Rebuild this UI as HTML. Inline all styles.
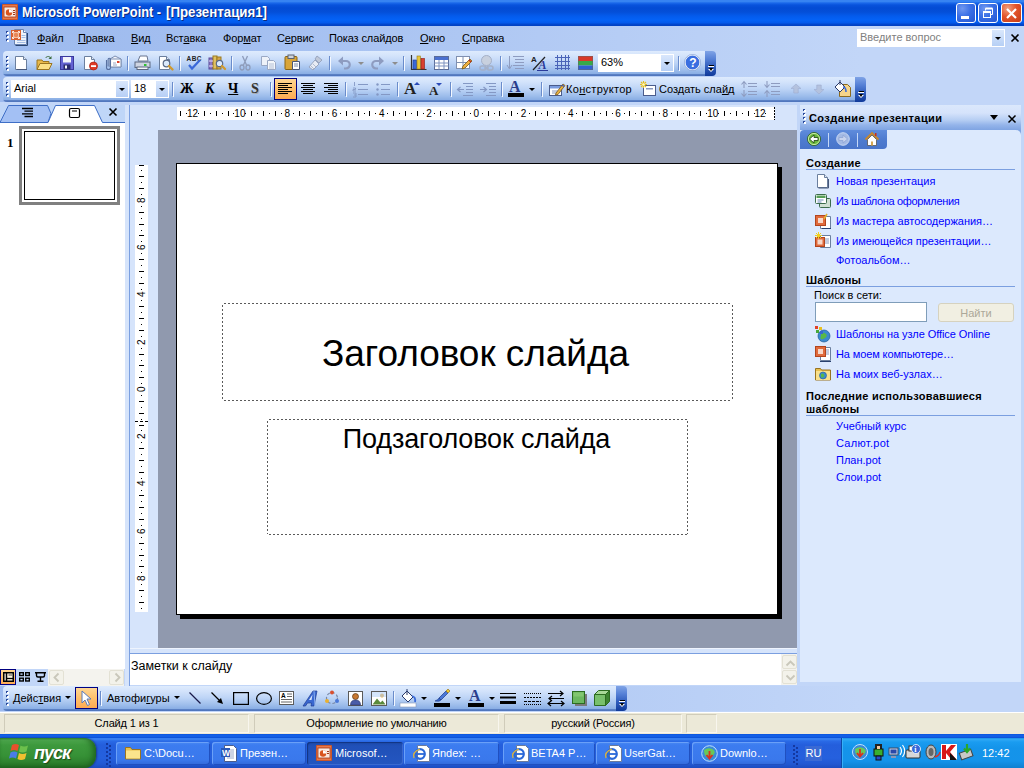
<!DOCTYPE html>
<html><head><meta charset="utf-8">
<style>
*{box-sizing:border-box;margin:0;padding:0}
html,body{width:1024px;height:768px;overflow:hidden;background:#c2d6f8;font-family:"Liberation Sans",sans-serif;font-size:11px;color:#000}
.a{position:absolute}
.nw{white-space:nowrap}
svg{position:absolute;overflow:visible}
#title{left:0;top:0;width:1024px;height:26px;background:linear-gradient(#2f7af0 0,#3f8cf4 1px,#1a68ea 3px,#0852dc 5px,#034bd4 8px,#044fd8 12px,#045bec 16px,#0462f6 20px,#0359ea 23px,#0248d0 24px,#0140c0 26px)}
#title .t{left:22px;top:4px;color:#fff;font-weight:bold;font-size:14px;text-shadow:1px 1px 0 #0c2a7c;transform-origin:0 0}
.wb{top:3px;width:20px;height:20px;border:1px solid #fff;border-radius:3px;background:radial-gradient(circle at 30% 25%,#6f97f0 0,#3a6fe6 45%,#2456d0 100%)}
#menubar{left:0;top:26px;width:1024px;height:25px;background:linear-gradient(90deg,#9dbaee 0,#a6c1f1 300px,#c2d6f8 860px)}
.mi{top:32px;font-size:11px;letter-spacing:-.12px}
#dock{left:0;top:51px;width:1024px;height:53px;background:linear-gradient(90deg,#9dbaee 0,#a6c1f1 300px,#c2d6f8 860px)}
.tb{left:3px;height:25px;border-radius:4px 0 0 4px;background:linear-gradient(#deebfd 0,#d3e3fb 5px,#bdd4f6 12px,#9dbdeb 19px,#88ade4 23px,#5a80c4 23.5px,#4c72ba 25px)}
.tbend{width:11px;height:25px;border-radius:0 4px 4px 0;background:linear-gradient(#7fa3e6 0,#5580d6 8px,#2f5cbc 16px,#103a9a 25px)}
.grip{width:2px;background:repeating-linear-gradient(#2a4a9c 0,#2a4a9c 2px,rgba(255,255,255,.0) 2px,rgba(255,255,255,0) 4px)}
.gripw{width:2px;background:repeating-linear-gradient(#fff 0,#fff 2px,rgba(255,255,255,.0) 2px,rgba(255,255,255,0) 4px)}
.sep{width:1px;height:14px;background:#6a8ccb;box-shadow:1px 1px 0 #f3f8ff}
.combo{height:18px;background:#fff;border:1px solid #fff;font-size:11px}
.dd{width:12px;background:linear-gradient(#d9e7fc,#b6cff5);top:0;bottom:0;right:0}
.dd:after,.arr:after{content:"";position:absolute;left:3px;top:7px;border:3px solid transparent;border-top:3px solid #000;border-bottom:0}
.arr{width:9px;height:9px}
.arr:after{left:1px;top:3px}
.arrg:after{border-top-color:#8d8d8d}
.sel{background:linear-gradient(#ffd692,#ffc06c 50%,#ffaa52);border:1px solid #000080}
.tl{font-size:11px;top:0}
.sbb{width:15px;height:15px;background:#f3f2ea;border:1px solid #e3e1d4;border-radius:2px}
.ph{font-weight:bold;font-size:11px;letter-spacing:.28px}
.pl{left:806px;width:209px;height:1px;background:#7b9fe0}
.lk{left:836px;font-size:11px;color:#0000ff}
.sp{top:714px;height:19px;border:1px solid #d4d0c0;border-right-color:#f8f6ee;border-bottom-color:#f8f6ee;border-top-color:#d0ccba;border-left-color:#d0ccba;text-align:center;line-height:17px;font-size:11px;white-space:nowrap;letter-spacing:-.15px}
.rn{top:1px;width:20px;text-align:center;font-size:10px;line-height:11px;background:transparent}
.rt{top:4px;width:1px;height:5px;background:#000}
.rd{top:6px;width:1px;height:1px;background:#000}
.vn{left:1px;height:20px;width:11px;font-size:10px;line-height:11px;writing-mode:vertical-rl;transform:rotate(180deg);text-align:center}
.vt{left:4px;height:1px;width:5px;background:#000}
.vd{left:6px;height:1px;width:1px;background:#000}
.tk{top:742px;height:23px;border-radius:3px;background:linear-gradient(#4a8af4 0,#3c7cf0 3px,#3a78ec 18px,#3268d8 23px);box-shadow:inset 1px 1px 0 #6aa0f8,inset -1px -1px 0 #2050c0;color:#fff;font-size:11px}
.tka{background:linear-gradient(#1c4aaa 0,#2050b8 4px,#2456c0 23px);box-shadow:inset 1px 1px 1px #123480,inset -1px -1px 0 #3a6ad0}
</style></head><body>
<!-- TITLE -->
<div id="title" class="a">
 <svg style="left:2px;top:4px" width="17" height="17" viewBox="0 0 17 17"><rect x="0" y="0" width="16" height="16" rx="1" fill="#c8562c"/><rect x="1" y="1" width="14" height="14" fill="#e8784a"/><rect x="2" y="3" width="12" height="10" fill="#fbe9df" stroke="#a03818" stroke-width=".8"/><circle cx="7" cy="8.5" r="3.2" fill="#d9541e"/><path d="M7 8.5V5.3A3.2 3.2 0 0 1 10.2 8.5z" fill="#fff"/><rect x="11" y="6" width="2" height="1" fill="#a03818"/><rect x="11" y="8" width="2" height="1" fill="#a03818"/><rect x="11" y="10" width="2" height="1" fill="#a03818"/></svg>
 <div class="t a nw" style="transform:scaleX(.912)">Microsoft PowerPoint -</div><div class="t a nw" style="left:165.500px;transform:scaleX(.948)">[Презентация1]</div>
 <div class="wb a" style="left:956px"><div class="a" style="left:4px;top:12px;width:8px;height:3px;background:#fff"></div></div>
 <div class="wb a" style="left:978px"><svg style="left:3px;top:3px" width="12" height="12" viewBox="0 0 12 12" fill="none" stroke="#fff"><path d="M3.5 3.5v-2h7v6h-2" stroke-width="1"/><path d="M3.5 1.5h7" stroke-width="2"/><rect x="1.5" y="4.5" width="7" height="6" stroke-width="1"/><path d="M1.5 5h7" stroke-width="2"/></svg></div>
 <div class="wb a" style="left:1001px;width:21px;background:radial-gradient(circle at 30% 25%,#f0a080 0,#e2542a 45%,#c43a14 100%)"><svg style="left:4px;top:4px" width="11" height="11" viewBox="0 0 11 11" stroke="#fff" stroke-width="2.2"><path d="M1 1l9 9M10 1l-9 9"/></svg></div>
</div>
<!-- MENU -->
<div id="menubar" class="a"></div>
<div class="grip a" style="left:6px;top:31px;height:11px"></div><div class="gripw a" style="left:7px;top:32px;height:11px"></div>
<svg style="left:11px;top:29px" width="17" height="17" viewBox="0 0 17 17"><path d="M3.500 .500h9l3 3v12h-12z" fill="#eef3fb" stroke="#6a84b4"/><path d="M12.500 .500v3h3" fill="#fff" stroke="#6a84b4"/><path d="M4.500 16.500h12v-12.500" fill="none" stroke="#2b4570"/><path d="M10.500 6.500h4M10.500 8.500h4M6 11.500h8.500M6 13.500h8.500" stroke="#a4bce4"/><rect x="0" y="1" width="10" height="10" fill="#d8602e"/><rect x="2" y="3" width="6" height="6" fill="#f6c4a8"/><circle cx="5" cy="6" r="2.200" fill="#e88858"/><path d="M1.500 4v-1.500h1.500M7 2.500h1.500v1.500M1.500 8v1.500h1.500M7 9.500h1.500v-1.500" fill="none" stroke="#fff" stroke-width=".9"/></svg>
<div class="mi a nw" style="left:37px"><u>Ф</u>айл</div>
<div class="mi a nw" style="left:78px"><u>П</u>равка</div>
<div class="mi a nw" style="left:131px"><u>В</u>ид</div>
<div class="mi a nw" style="left:166px">Вст<u>а</u>вка</div>
<div class="mi a nw" style="left:223px">Фор<u>м</u>ат</div>
<div class="mi a nw" style="left:277px">С<u>е</u>рвис</div>
<div class="mi a nw" style="left:329px">Показ слай<u>д</u>ов</div>
<div class="mi a nw" style="left:420px"><u>О</u>кно</div>
<div class="mi a nw" style="left:462px"><u>С</u>правка</div>
<div class="a" style="left:857px;top:29px;width:148px;height:18px;background:#fff;border:1px solid #fff"><div class="a nw" style="left:2px;top:1px;font-size:11px;color:#7f7f7f">Введите вопрос</div><div class="dd a"></div></div>
<svg style="left:1011px;top:34px" width="8" height="8" viewBox="0 0 8 8" stroke="#000" stroke-width="1.6"><path d="M.5.5l7 7M7.5.5l-7 7"/></svg>
<!-- DOCK -->
<div id="dock" class="a"></div>
<div class="tb a" style="top:51px;width:703px"></div><div class="tbend a" style="left:705px;top:51px"><div class="a" style="left:3px;top:15px;width:6px;height:1px;background:#fff"></div><div class="a" style="left:3px;top:18px;border:3px solid transparent;border-top:3px solid #fff;border-bottom:0"></div><div class="a" style="left:4px;top:14px;width:5px;height:1px;background:#000"></div><div class="a" style="left:4px;top:17px;border:2.5px solid transparent;border-top:3px solid #000;border-bottom:0"></div></div>
<div class="tb a" style="top:77px;width:853px"></div><div class="tbend a" style="left:855px;top:77px"><div class="a" style="left:3px;top:15px;width:6px;height:1px;background:#fff"></div><div class="a" style="left:3px;top:18px;border:3px solid transparent;border-top:3px solid #fff;border-bottom:0"></div><div class="a" style="left:4px;top:14px;width:5px;height:1px;background:#000"></div><div class="a" style="left:4px;top:17px;border:2.5px solid transparent;border-top:3px solid #000;border-bottom:0"></div></div>
<div class="grip a" style="left:6px;top:56px;height:15px"></div><div class="gripw a" style="left:7px;top:57px;height:15px"></div>
<div class="grip a" style="left:6px;top:82px;height:15px"></div><div class="gripw a" style="left:7px;top:83px;height:15px"></div>
<!-- TB1 icons -->
<svg style="left:14px;top:55px" width="16" height="16" viewBox="0 0 16 16"><path d="M1.5 1.5h8l3 3v10h-11z" fill="#fff" stroke="#6b7f9e"/><path d="M9.5 1.5v3h3" fill="#e4ebf5" stroke="#6b7f9e"/><path d="M2.5 14.5h10.5" stroke="#47587a"/></svg>
<svg style="left:36px;top:55px" width="17" height="16" viewBox="0 0 17 16"><path d="M1 5h5l1 1.5h6v8h-12z" fill="#e8b84a" stroke="#9a7420"/><path d="M1 14.5l3-6h12l-3 6z" fill="#fbdf86" stroke="#9a7420"/><path d="M9.5 3c1.5-2 4-2 5 0" fill="none" stroke="#3c6a3c"/><path d="M15.5 1v3h-3z" fill="#3c6a3c"/></svg>
<svg style="left:60px;top:56px" width="14" height="14" viewBox="0 0 14 14"><rect x=".5" y=".5" width="13" height="13" fill="#6462d2" stroke="#3a389c"/><rect x="3" y="1" width="8" height="5.500" fill="#f2f3fb"/><rect x="3.500" y="8.500" width="7" height="5" fill="#2a2a6c"/><rect x="5" y="9.500" width="2" height="3" fill="#f2f3fb"/></svg>
<svg style="left:83px;top:55px" width="16" height="16" viewBox="0 0 16 16"><path d="M1.5 1.5h7l3 3v10h-10z" fill="#fff" stroke="#6b7f9e"/><path d="M8.5 1.5v3h3" fill="#e4ebf5" stroke="#6b7f9e"/><circle cx="10.5" cy="11" r="4" fill="#e03c28" stroke="#a81c10" stroke-width=".7"/><rect x="8" y="10.2" width="5" height="1.8" fill="#fff"/></svg>
<svg style="left:104px;top:55px" width="18" height="16" viewBox="0 0 18 16"><path d="M6 4l5-3 6 3v8h-11z" fill="#f1f4fa" stroke="#7d8fb2"/><path d="M6 4h11v8h-11z" fill="#fff" stroke="#7d8fb2"/><rect x="13" y="6" width="2.5" height="2" fill="#d8402c"/><path d="M9 8h3M9 10h4" stroke="#9aa7c4"/><path d="M2.5 5v7.5a2 2 0 0 0 4 0v-8a1.2 1.2 0 0 0-2.4 0v7" fill="none" stroke="#5870a0" stroke-width="1.1"/></svg>
<div class="sep a" style="left:127px;top:56px"></div>
<svg style="left:134px;top:55px" width="17" height="16" viewBox="0 0 17 16"><path d="M4 6l2-5h7l1 5z" fill="#fff" stroke="#6a7690"/><rect x="1" y="7" width="15" height="5.500" fill="#cfd5e2" stroke="#5c6880"/><rect x="3" y="12" width="11" height="2.500" fill="#f4f6fa" stroke="#5c6880"/><rect x="10" y="9" width="2.500" height="2" fill="#30c030"/></svg>
<svg style="left:158px;top:55px" width="16" height="16" viewBox="0 0 16 16"><path d="M1.5 1.5h7l3 3v10h-10z" fill="#fff" stroke="#6b7f9e"/><path d="M8.5 1.5v3h3" fill="#e4ebf5" stroke="#6b7f9e"/><circle cx="8.500" cy="8.500" r="3.300" fill="#dbeafc" stroke="#5a6a86" stroke-width="1.200"/><path d="M11 11l3.500 3.500" stroke="#d09a30" stroke-width="2.400" stroke-linecap="round"/></svg>
<div class="sep a" style="left:179px;top:56px"></div>
<svg style="left:186px;top:54px" width="17" height="17" viewBox="0 0 17 17"><text x="0.500" y="6.500" font-family="Liberation Sans" font-size="6.500" font-weight="bold" fill="#222" textLength="15">ABC</text><path d="M3 11l3 3.500 8-8.500" fill="none" stroke="#3a68d8" stroke-width="2.200"/></svg>
<svg style="left:208px;top:54px" width="18" height="17" viewBox="0 0 18 17"><rect x="1" y="4" width="4" height="11" fill="#8c78c8" stroke="#5a4a98"/><rect x="5" y="2" width="4" height="13" fill="#e0c060" stroke="#9a7a20"/><rect x="9" y="3" width="4" height="12" fill="#d8a848" stroke="#9a7a20"/><path d="M1 7h4M1 12h4" stroke="#e8e0f8"/><circle cx="11.500" cy="9.500" r="3.200" fill="#dbeafc" stroke="#5a6a86" stroke-width="1.200"/><path d="M14 12l3 3" stroke="#d09a30" stroke-width="2.400" stroke-linecap="round"/></svg>
<div class="sep a" style="left:231px;top:56px"></div>
<svg style="left:239px;top:55px" width="12" height="16" viewBox="0 0 12 16" fill="none" stroke="#8e9cba" stroke-width="1.300"><path d="M3.500 1l4 9M8.500 1l-4 9"/><ellipse cx="3" cy="12.500" rx="2" ry="2.500"/><ellipse cx="9" cy="12.500" rx="2" ry="2.500"/></svg>
<svg style="left:261px;top:55px" width="16" height="16" viewBox="0 0 16 16"><path d="M.5 1.500h6l2 2v7h-8z" fill="#eef2f9" stroke="#9aa8c4"/><path d="M6.500 5.500h6l2 2v7h-8z" fill="#f4f7fb" stroke="#9aa8c4"/><path d="M8 9h5M8 11h5M8 13h5" stroke="#b4c0d6"/></svg>
<svg style="left:284px;top:54px" width="17" height="17" viewBox="0 0 17 17"><rect x="1" y="2.500" width="12" height="13" rx="1" fill="#d9a53a" stroke="#8a6414"/><rect x="4" y="1" width="6" height="3.500" fill="#cfd4dc" stroke="#5a6272"/><path d="M8.500 7.500h7v8h-7z" fill="#fff" stroke="#4a5878"/><path d="M10 10h4M10 12h4" stroke="#7a8aa8"/></svg>
<svg style="left:308px;top:55px" width="16" height="16" viewBox="0 0 16 16"><path d="M9 1l5 4-3 3-4-4z" fill="#c0c8d8" stroke="#99a6c0"/><path d="M7 5l4 4-6 6-4-3z" fill="#e8ecf4" stroke="#99a6c0"/><path d="M3 11l3 3M5 9l3 3" stroke="#b0bbd0"/></svg>
<div class="sep a" style="left:329px;top:56px"></div>
<svg style="left:338px;top:56px" width="13" height="14" viewBox="0 0 13 14" fill="none"><path d="M3 5h5a3.500 3.500 0 0 1 0 7.500h-2" stroke="#8e9cc0" stroke-width="2.200"/><path d="M0 5l5-4.500v9z" fill="#8e9cc0"/></svg>
<div class="arr arrg a" style="left:357px;top:59px"></div>
<svg style="left:371px;top:56px" width="13" height="14" viewBox="0 0 13 14" fill="none"><path d="M10 5h-5a3.500 3.500 0 0 0 0 7.500h2" stroke="#8e9cc0" stroke-width="2.200"/><path d="M13 5l-5-4.500v9z" fill="#8e9cc0"/></svg>
<div class="arr arrg a" style="left:391px;top:59px"></div>
<div class="sep a" style="left:403px;top:56px"></div>
<svg style="left:410px;top:54px" width="17" height="17" viewBox="0 0 17 17"><path d="M1.500 1v14.500h15" fill="none" stroke="#333" stroke-width="1.200"/><rect x="3" y="6" width="3.500" height="9" fill="#3a68d8" stroke="#1c3c98" stroke-width=".6"/><rect x="7" y="2" width="3.500" height="13" fill="#e8c83a" stroke="#9a7a14" stroke-width=".6"/><rect x="11" y="4.500" width="3.500" height="10.500" fill="#d84030" stroke="#8a1c14" stroke-width=".6"/></svg>
<svg style="left:434px;top:56px" width="15" height="14" viewBox="0 0 15 14"><rect x=".5" y=".5" width="14" height="13" fill="#fff" stroke="#5a6c98"/><rect x="1" y="1" width="13" height="3" fill="#4a70d0"/><path d="M.5 7h14M.5 10h14M5 4v9.500M10 4v9.500" stroke="#7f93c0"/></svg>
<svg style="left:456px;top:55px" width="16" height="16" viewBox="0 0 16 16"><rect x=".5" y="1.500" width="13" height="12" fill="#fff" stroke="#8090b0"/><path d="M.5 7.500h13M7 1.500v12" stroke="#8090b0"/><path d="M6 14l1-3 7-7 2 2-7 7z" fill="#f0b040" stroke="#7a5a14" stroke-width=".8"/><path d="M13 5l2 2" stroke="#c03020" stroke-width="1.500"/></svg>
<svg style="left:479px;top:55px" width="16" height="16" viewBox="0 0 16 16"><circle cx="7.500" cy="5.500" r="5" fill="#c8d0de" stroke="#a4b0c8"/><rect x="1" y="11" width="6" height="4" rx="2" fill="none" stroke="#a4b0c8" stroke-width="1.500"/><rect x="8" y="11" width="6" height="4" rx="2" fill="none" stroke="#a4b0c8" stroke-width="1.500"/><path d="M5 13h5" stroke="#a4b0c8" stroke-width="1.500"/></svg>
<div class="sep a" style="left:500px;top:56px"></div>
<svg style="left:507px;top:55px" width="17" height="16" viewBox="0 0 17 16" fill="none" stroke="#8e9cc0"><path d="M2.500 1v12M0 10l2.500 4 2.500-4" /><path d="M6 1.500h11M8 4.500h9M8 7.500h9M6 10.500h11M8 13.500h9"/></svg>
<svg style="left:531px;top:55px" width="17" height="16" viewBox="0 0 17 16"><text x="0" y="7" font-family="Liberation Sans" font-size="8" font-weight="bold" fill="#222">A</text><path d="M2 15l12-13" stroke="#222" stroke-width="1.200"/><text x="7.500" y="14" font-family="Liberation Serif" font-size="12" font-weight="bold" font-style="italic" fill="#2a3a9a">A</text><path d="M6 15.500h11" stroke="#2a3a9a"/></svg>
<svg style="left:555px;top:55px" width="15" height="15" viewBox="0 0 15 15" stroke="#4a64b8"><path d="M2.500 0v15M6.500 0v15M10.500 0v15M0 2.500h15M0 6.500h15M0 10.500h15M13.500 0v15M0 13.500h15" stroke-width="1"/></svg>
<svg style="left:578px;top:56px" width="15" height="14" viewBox="0 0 15 14"><rect x="0" y="0" width="15" height="5" fill="#d83828"/><rect x="0" y="5" width="15" height="4.500" fill="#38a848"/><rect x="0" y="9.500" width="15" height="4.500" fill="#3060d0"/><rect x=".5" y=".5" width="14" height="13" fill="none" stroke="#666" stroke-opacity=".5"/></svg>
<div class="combo a" style="left:598px;top:54px;width:76px"><div class="a nw" style="left:2px;top:1px;font-size:11px">63%</div><div class="dd a"></div></div>
<div class="sep a" style="left:678px;top:56px"></div>
<svg style="left:684px;top:54px" width="17" height="17" viewBox="0 0 17 17"><circle cx="8.500" cy="8.500" r="7.500" fill="#3a6ee0" stroke="#fff" stroke-width="1.200"/><circle cx="8.500" cy="8.500" r="8" fill="none" stroke="#6a8cc8" stroke-width=".6"/><text x="5.200" y="13" font-family="Liberation Sans" font-size="12" font-weight="bold" fill="#fff">?</text></svg>
<!-- TB2 -->
<div class="combo a" style="left:11px;top:80px;width:118px"><div class="a nw" style="left:2px;top:1px;font-size:11px">Arial</div><div class="dd a"></div></div>
<div class="combo a" style="left:131px;top:80px;width:38px"><div class="a nw" style="left:2px;top:1px;font-size:11px">18</div><div class="dd a"></div></div>
<div class="sep a" style="left:172px;top:82px"></div>
<div class="a nw" style="left:180px;top:81px;font:bold 14px 'Liberation Serif',serif">Ж</div>
<div class="a nw" style="left:205px;top:81px;font:italic bold 14px 'Liberation Serif',serif">К</div>
<div class="a nw" style="left:228px;top:81px;font:bold 14px 'Liberation Serif',serif;text-decoration:underline">Ч</div>
<div class="a nw" style="left:251px;top:81px;font:bold 14px 'Liberation Serif',serif;color:#333;text-shadow:1px 1px 0 #aaa">S</div>
<div class="sep a" style="left:270px;top:82px"></div>
<div class="sel a" style="left:274px;top:78px;width:23px;height:22px"></div>
<svg style="left:278px;top:83px" width="14" height="11" viewBox="0 0 14 11" stroke="#000" stroke-width="1"><path d="M0 0.5h14M0 2.5h10M0 4.5h14M0 6.5h10M0 8.5h14M0 10.5h10"/></svg>
<svg style="left:301px;top:83px" width="14" height="11" viewBox="0 0 14 11" stroke="#000" stroke-width="1"><path d="M0 0.5h14M2 2.5h10M0 4.5h14M2 6.5h10M0 8.5h14M2 10.5h10"/></svg>
<svg style="left:324px;top:83px" width="14" height="11" viewBox="0 0 14 11" stroke="#000" stroke-width="1"><path d="M0 0.5h14M4 2.5h10M0 4.5h14M4 6.5h10M0 8.5h14M4 10.5h10"/></svg>
<div class="sep a" style="left:345px;top:82px"></div>
<svg style="left:353px;top:82px" width="15" height="15" viewBox="0 0 15 15" stroke="#8498c4"><path d="M5 2.500h10M5 7.500h10M5 12.500h10" stroke-width="1.200"/><path d="M1.500 0v4M0 6h2.500v1.500h-2.500v1.500h3M0 11h3v2h-2M3 13v2h-3" fill="none" stroke-width=".9"/></svg>
<svg style="left:376px;top:82px" width="14" height="15" viewBox="0 0 14 15" stroke="#8498c4"><path d="M5 2.500h9M5 7.500h9M5 12.500h9" stroke-width="1.200"/><circle cx="1.500" cy="2.500" r="1.200" fill="#8498c4" stroke="none"/><circle cx="1.500" cy="7.500" r="1.200" fill="#8498c4" stroke="none"/><circle cx="1.500" cy="12.500" r="1.200" fill="#8498c4" stroke="none"/></svg>
<div class="sep a" style="left:397px;top:82px"></div>
<div class="a nw" style="left:404px;top:79px;font:bold 17px 'Liberation Serif',serif;color:#222">A</div>
<div class="a" style="left:414px;top:82px;border:3px solid transparent;border-bottom:3px solid #2a4ab8;border-top:0"></div>
<div class="a nw" style="left:429px;top:83px;font:bold 13px 'Liberation Serif',serif;color:#222">A</div>
<div class="a" style="left:436px;top:83px;border:3px solid transparent;border-top:3px solid #2a4ab8;border-bottom:0"></div>
<div class="sep a" style="left:450px;top:82px"></div>
<svg style="left:457px;top:82px" width="16" height="15" viewBox="0 0 16 15" fill="none" stroke="#8498c4"><path d="M6 1.500h10M9 4.500h7M9 7.500h7M9 10.500h7M6 13.500h10"/><path d="M7 7.500h-6M3.500 5l-3 2.500 3 2.500" stroke-width="1.200"/></svg>
<svg style="left:480px;top:82px" width="16" height="15" viewBox="0 0 16 15" fill="none" stroke="#8498c4"><path d="M6 1.500h10M9 4.500h7M9 7.500h7M9 10.500h7M6 13.500h10"/><path d="M0 7.500h6M3.500 5l3 2.500-3 2.500" stroke-width="1.200"/></svg>
<div class="sep a" style="left:501px;top:82px"></div>
<div class="a nw" style="left:509px;top:78px;font:bold 16px 'Liberation Serif',serif;color:#2a3e8c">A</div>
<div class="a" style="left:508px;top:93px;width:16px;height:4px;background:#000"></div>
<div class="arr a" style="left:528px;top:85px"></div>
<div class="sep a" style="left:541px;top:82px"></div>
<svg style="left:549px;top:82px" width="16" height="15" viewBox="0 0 16 15"><rect x=".5" y="3.500" width="12" height="10" fill="#fff" stroke="#4a5c8c"/><rect x="1" y="4" width="11" height="2.500" fill="#7a9ce0"/><path d="M3 9h6M3 11h5" stroke="#8a9ac0"/><path d="M7 11l7-9 2 1.500-7 9-2.500.5z" fill="#e8b040" stroke="#6a4c10" stroke-width=".7"/><path d="M13 3l2 1.500" stroke="#3a58b8" stroke-width="1.400"/></svg>
<div class="tl a nw" style="left:566px;top:83px;letter-spacing:.3px">Ко<u>н</u>структор</div>
<svg style="left:640px;top:81px" width="16" height="16" viewBox="0 0 16 16"><rect x="3.500" y="4.500" width="12" height="10" fill="#fff" stroke="#4a5c8c"/><rect x="6" y="7" width="7" height="1.500" fill="#8a9ac0"/><path d="M3.500 0v7M0 3.500h7M1 1l5 5M6 1l-5 5" stroke="#e8c020" stroke-width="1.100"/><circle cx="3.500" cy="3.500" r="1.300" fill="#fff8c0"/></svg>
<div class="tl a nw" style="left:659px;top:83px">Создать сла<u>й</u>д</div>
<svg style="left:741px;top:81px" width="16" height="16" viewBox="0 0 16 16" fill="none" stroke="#8e9cc0"><path d="M7 2.500h9M7 5.500h9M7 10.500h9M7 13.500h9" stroke-width="1.200"/><path d="M3 1v6M.5 3.500l2.500-3 2.500 3M3 15v-6M.5 12.500l2.500 3 2.500-3" stroke-width="1.100"/></svg>
<svg style="left:764px;top:81px" width="16" height="16" viewBox="0 0 16 16" fill="none" stroke="#8e9cc0"><path d="M7 2.500h9M7 5.500h9M7 10.500h9M7 13.500h9" stroke-width="1.200"/><path d="M3 0v6M.5 3.500l2.500 3 2.500-3M3 16v-6M.5 12.500l2.500-3 2.500 3" stroke-width="1.100"/></svg>
<svg style="left:791px;top:84px" width="10" height="9" viewBox="0 0 11 10"><path d="M5.500 0l5.500 5h-3v5h-5v-5h-3z" fill="#b4c2de" stroke="#9aaace" stroke-width=".6"/></svg>
<svg style="left:814px;top:85px" width="10" height="9" viewBox="0 0 11 10"><path d="M5.500 10l5.500-5h-3v-5h-5v5h-3z" fill="#b4c2de" stroke="#9aaace" stroke-width=".6"/></svg>
<svg style="left:834px;top:80px" width="17" height="17" viewBox="0 0 17 17"><path d="M5.500 4.500h8l3 3v9h-11z" fill="#f5d48a" stroke="#8a6a20"/><path d="M1 7l5-5 5 5-5 5z" fill="#fff" stroke="#2a3a6a"/><path d="M6 0v5" stroke="#2a3a6a"/><path d="M9 7q3 0 3 5" fill="none" stroke="#3a6ad8" stroke-width="1.600"/></svg>
<!-- WORKSPACE -->
<div class="a" style="left:0;top:102px;width:1024px;height:3px;background:#c2d6f8"></div>
<div class="a" style="left:0;top:105px;width:125px;height:18px;background:#bfd6f8"></div>
<div class="a" style="left:0;top:123px;width:125px;height:546px;background:#fff"></div>
<svg style="left:0;top:105px" width="125" height="18" viewBox="0 0 125 18"><path d="M0 17.500l8.500-17h39l3.500 8-3 9z" fill="#a3c0f4" stroke="#3e6ec6" stroke-width="1"/><path d="M48 18l7.500-17.500h39l8 17.500z" fill="#fff"/><path d="M48 17.500l7.500-17h39l8 17h22.500" fill="none" stroke="#3e6ec6" stroke-width="1"/><path d="M22 3.500h11M24.500 6.200h8.500M22 8.800h11M24.500 11.500h8.500" stroke="#000" stroke-width="1.300"/><rect x="69.500" y="3.500" width="10" height="9" rx="1.500" fill="#fff" stroke="#000" stroke-width="1.200"/><path d="M72 6h5" stroke="#000"/><path d="M109.500 3.500l7 7M116.500 3.500l-7 7" stroke="#000" stroke-width="1.600"/></svg>
<div class="a" style="left:125px;top:105px;width:4px;height:581px;background:#d6e4fb"></div>
<div class="a" style="left:129px;top:105px;width:1px;height:581px;background:#7b9fe0"></div>
<!-- thumbnail -->
<div class="a nw" style="left:7px;top:135px;font:bold 13px 'Liberation Serif',serif">1</div>
<div class="a" style="left:19px;top:126px;width:101px;height:79px;border:3px solid #808080;background:#fff"></div>
<div class="a" style="left:24px;top:131px;width:91px;height:69px;border:1px solid #000;background:#fff"></div>
<!-- main bg -->
<div class="a" style="left:130px;top:105px;width:668px;height:548px;background:#d6e4fb"></div>
<div class="a" style="left:158px;top:130px;width:639px;height:518px;background:#9099ae"></div>
<!-- slide -->
<div class="a" style="left:180px;top:167px;width:602px;height:452px;background:#000"></div>
<div class="a" style="left:176px;top:163px;width:602px;height:452px;background:#fff;border:1px solid #000"></div>
<div class="a" style="left:224px;top:303px;width:508px;height:1px;background:repeating-linear-gradient(90deg,#5a5a5a 0,#5a5a5a 2px,transparent 2px,transparent 4px)"></div><div class="a" style="left:224px;top:400px;width:508px;height:1px;background:repeating-linear-gradient(90deg,#5a5a5a 0,#5a5a5a 2px,transparent 2px,transparent 4px)"></div><div class="a" style="left:222px;top:305px;width:1px;height:95px;background:repeating-linear-gradient(180deg,#5a5a5a 0,#5a5a5a 2px,transparent 2px,transparent 4px)"></div><div class="a" style="left:732px;top:305px;width:1px;height:95px;background:repeating-linear-gradient(180deg,#5a5a5a 0,#5a5a5a 2px,transparent 2px,transparent 4px)"></div>
<div class="a" style="left:269px;top:419px;width:418px;height:1px;background:repeating-linear-gradient(90deg,#5a5a5a 0,#5a5a5a 2px,transparent 2px,transparent 4px)"></div><div class="a" style="left:269px;top:534px;width:418px;height:1px;background:repeating-linear-gradient(90deg,#5a5a5a 0,#5a5a5a 2px,transparent 2px,transparent 4px)"></div><div class="a" style="left:267px;top:421px;width:1px;height:113px;background:repeating-linear-gradient(180deg,#5a5a5a 0,#5a5a5a 2px,transparent 2px,transparent 4px)"></div><div class="a" style="left:687px;top:421px;width:1px;height:113px;background:repeating-linear-gradient(180deg,#5a5a5a 0,#5a5a5a 2px,transparent 2px,transparent 4px)"></div>
<div class="a nw" style="left:220px;top:332px;width:511px;text-align:center;font-size:37px;line-height:44px;letter-spacing:-.05px">Заголовок слайда</div>
<div class="a nw" style="left:266px;top:423px;width:421px;text-align:center;font-size:27px;line-height:32px;letter-spacing:-.15px">Подзаголовок слайда</div>
<!-- rulers -->
<div id="hr" class="a" style="left:177px;top:107px;width:598px;height:13px;background:#fff;overflow:hidden"><div class="rt a" style="left:3px"></div><div class="rn a" style="left:5.6px">12</div><div class="rt a" style="left:27px"></div><div class="rt a" style="left:39px"></div><div class="rt a" style="left:51px"></div><div class="rn a" style="left:52.9px">10</div><div class="rt a" style="left:74px"></div><div class="rt a" style="left:86px"></div><div class="rt a" style="left:98px"></div><div class="rn a" style="left:100.2px">8</div><div class="rt a" style="left:122px"></div><div class="rt a" style="left:133px"></div><div class="rt a" style="left:145px"></div><div class="rn a" style="left:147.5px">6</div><div class="rt a" style="left:169px"></div><div class="rt a" style="left:181px"></div><div class="rt a" style="left:192px"></div><div class="rn a" style="left:194.7px">4</div><div class="rt a" style="left:216px"></div><div class="rt a" style="left:228px"></div><div class="rt a" style="left:240px"></div><div class="rn a" style="left:242.0px">2</div><div class="rt a" style="left:263px"></div><div class="rt a" style="left:275px"></div><div class="rt a" style="left:287px"></div><div class="rn a" style="left:289.3px">0</div><div class="rt a" style="left:311px"></div><div class="rt a" style="left:322px"></div><div class="rt a" style="left:334px"></div><div class="rn a" style="left:336.6px">2</div><div class="rt a" style="left:358px"></div><div class="rt a" style="left:370px"></div><div class="rt a" style="left:382px"></div><div class="rn a" style="left:383.9px">4</div><div class="rt a" style="left:405px"></div><div class="rt a" style="left:417px"></div><div class="rt a" style="left:429px"></div><div class="rn a" style="left:431.1px">6</div><div class="rt a" style="left:452px"></div><div class="rt a" style="left:464px"></div><div class="rt a" style="left:476px"></div><div class="rn a" style="left:478.4px">8</div><div class="rt a" style="left:500px"></div><div class="rt a" style="left:512px"></div><div class="rt a" style="left:523px"></div><div class="rn a" style="left:525.7px">10</div><div class="rt a" style="left:547px"></div><div class="rt a" style="left:559px"></div><div class="rt a" style="left:571px"></div><div class="rn a" style="left:573.0px">12</div><div class="rd a" style="left:9px"></div><div class="rd a" style="left:21px"></div><div class="rd a" style="left:33px"></div><div class="rd a" style="left:45px"></div><div class="rd a" style="left:56px"></div><div class="rd a" style="left:68px"></div><div class="rd a" style="left:80px"></div><div class="rd a" style="left:92px"></div><div class="rd a" style="left:104px"></div><div class="rd a" style="left:116px"></div><div class="rd a" style="left:127px"></div><div class="rd a" style="left:139px"></div><div class="rd a" style="left:151px"></div><div class="rd a" style="left:163px"></div><div class="rd a" style="left:175px"></div><div class="rd a" style="left:187px"></div><div class="rd a" style="left:198px"></div><div class="rd a" style="left:210px"></div><div class="rd a" style="left:222px"></div><div class="rd a" style="left:234px"></div><div class="rd a" style="left:246px"></div><div class="rd a" style="left:257px"></div><div class="rd a" style="left:269px"></div><div class="rd a" style="left:281px"></div><div class="rd a" style="left:293px"></div><div class="rd a" style="left:305px"></div><div class="rd a" style="left:317px"></div><div class="rd a" style="left:328px"></div><div class="rd a" style="left:340px"></div><div class="rd a" style="left:352px"></div><div class="rd a" style="left:364px"></div><div class="rd a" style="left:376px"></div><div class="rd a" style="left:387px"></div><div class="rd a" style="left:399px"></div><div class="rd a" style="left:411px"></div><div class="rd a" style="left:423px"></div><div class="rd a" style="left:435px"></div><div class="rd a" style="left:447px"></div><div class="rd a" style="left:458px"></div><div class="rd a" style="left:470px"></div><div class="rd a" style="left:482px"></div><div class="rd a" style="left:494px"></div><div class="rd a" style="left:506px"></div><div class="rd a" style="left:517px"></div><div class="rd a" style="left:529px"></div><div class="rd a" style="left:541px"></div><div class="rd a" style="left:553px"></div><div class="rd a" style="left:565px"></div><div class="rd a" style="left:577px"></div><div class="rd a" style="left:588px"></div><div class="a" style="left:597px;top:0;width:1px;height:13px;background:repeating-linear-gradient(#000 0,#000 2px,#fff 2px,#fff 3px)"></div></div>
<div id="vr" class="a" style="left:135px;top:165px;width:13px;height:447px;background:#fff;overflow:hidden"><div class="vt a" style="top:0px"></div><div class="vt a" style="top:11px"></div><div class="vt a" style="top:23px"></div><div class="vn a" style="top:24.7px">8</div><div class="vt a" style="top:47px"></div><div class="vt a" style="top:59px"></div><div class="vt a" style="top:70px"></div><div class="vn a" style="top:72.0px">6</div><div class="vt a" style="top:94px"></div><div class="vt a" style="top:106px"></div><div class="vt a" style="top:118px"></div><div class="vn a" style="top:119.2px">4</div><div class="vt a" style="top:141px"></div><div class="vt a" style="top:153px"></div><div class="vt a" style="top:165px"></div><div class="vn a" style="top:166.5px">2</div><div class="vt a" style="top:189px"></div><div class="vt a" style="top:200px"></div><div class="vt a" style="top:212px"></div><div class="vn a" style="top:213.8px">0</div><div class="vt a" style="top:236px"></div><div class="vt a" style="top:248px"></div><div class="vt a" style="top:260px"></div><div class="vn a" style="top:261.1px">2</div><div class="vt a" style="top:283px"></div><div class="vt a" style="top:295px"></div><div class="vt a" style="top:307px"></div><div class="vn a" style="top:308.4px">4</div><div class="vt a" style="top:330px"></div><div class="vt a" style="top:342px"></div><div class="vt a" style="top:354px"></div><div class="vn a" style="top:355.6px">6</div><div class="vt a" style="top:378px"></div><div class="vt a" style="top:390px"></div><div class="vt a" style="top:401px"></div><div class="vn a" style="top:402.9px">8</div><div class="vt a" style="top:425px"></div><div class="vt a" style="top:437px"></div><div class="vd a" style="top:5px"></div><div class="vd a" style="top:17px"></div><div class="vd a" style="top:29px"></div><div class="vd a" style="top:41px"></div><div class="vd a" style="top:53px"></div><div class="vd a" style="top:65px"></div><div class="vd a" style="top:76px"></div><div class="vd a" style="top:88px"></div><div class="vd a" style="top:100px"></div><div class="vd a" style="top:112px"></div><div class="vd a" style="top:124px"></div><div class="vd a" style="top:135px"></div><div class="vd a" style="top:147px"></div><div class="vd a" style="top:159px"></div><div class="vd a" style="top:171px"></div><div class="vd a" style="top:183px"></div><div class="vd a" style="top:195px"></div><div class="vd a" style="top:206px"></div><div class="vd a" style="top:218px"></div><div class="vd a" style="top:230px"></div><div class="vd a" style="top:242px"></div><div class="vd a" style="top:254px"></div><div class="vd a" style="top:265px"></div><div class="vd a" style="top:277px"></div><div class="vd a" style="top:289px"></div><div class="vd a" style="top:301px"></div><div class="vd a" style="top:313px"></div><div class="vd a" style="top:325px"></div><div class="vd a" style="top:336px"></div><div class="vd a" style="top:348px"></div><div class="vd a" style="top:360px"></div><div class="vd a" style="top:372px"></div><div class="vd a" style="top:384px"></div><div class="vd a" style="top:395px"></div><div class="vd a" style="top:407px"></div><div class="vd a" style="top:419px"></div><div class="vd a" style="top:431px"></div><div class="vd a" style="top:443px"></div><div class="a" style="left:0;top:256px;width:13px;height:1px;background:repeating-linear-gradient(90deg,#000 0,#000 3px,#fff 3px,#fff 5px)"></div></div>
<!-- notes -->
<div class="a" style="left:130px;top:648px;width:667px;height:1px;background:#eef4fe"></div><div class="a" style="left:129px;top:653px;width:669px;height:1px;background:#7b9fe0"></div>
<div class="a" style="left:129px;top:654px;width:669px;height:31px;background:#fff;border-left:1px solid #7b9fe0"></div>
<div class="a nw" style="left:131px;top:659px;font-size:12.5px">Заметки к слайду</div>
<div class="a" style="left:781px;top:654px;width:17px;height:31px;background:#f4f3ee"></div>
<div class="sbb a" style="left:782px;top:655px;height:14px"><svg style="left:3px;top:4px" width="9" height="6" viewBox="0 0 9 6" fill="none" stroke="#c9c7ba" stroke-width="1.800"><path d="M.5 5.500l4-4 4 4"/></svg></div>
<div class="sbb a" style="left:782px;top:670px;height:14px"><svg style="left:3px;top:4px" width="9" height="6" viewBox="0 0 9 6" fill="none" stroke="#c9c7ba" stroke-width="1.800"><path d="M.5.5l4 4 4-4"/></svg></div>
<!-- view buttons -->
<div class="a" style="left:0;top:669px;width:124px;height:17px;background:#c2d6f8"></div>
<div class="sel a" style="left:0;top:669px;width:16px;height:16px"></div>
<svg style="left:3px;top:672px" width="11" height="10" viewBox="0 0 11 10" fill="none" stroke="#000"><rect x=".75" y=".75" width="9.500" height="8.500" stroke-width="1.500" fill="#fff4e0"/><path d="M3.500 0v10" stroke-width="1.500"/><path d="M4 6.500h7" stroke-width="1.300"/><path d="M5.500 3h3.500" stroke="#444" stroke-width="1"/></svg>
<svg style="left:19px;top:672px" width="11" height="10" viewBox="0 0 11 10" fill="none" stroke="#000" stroke-width="1.400"><rect x=".7" y=".7" width="3.600" height="2.800"/><rect x="6.700" y=".7" width="3.600" height="2.800"/><rect x=".7" y="6.200" width="3.600" height="2.800"/><rect x="6.700" y="6.200" width="3.600" height="2.800"/></svg>
<svg style="left:35px;top:672px" width="11" height="10" viewBox="0 0 11 10" fill="none" stroke="#000"><path d="M0 .75h11" stroke-width="1.500"/><path d="M1.500 1v2.500q0 1.500 1.500 1.500h5q1.500 0 1.500-1.500v-2.500" stroke-width="1.400"/><path d="M5.500 5v3.500M2.500 9.250h6" stroke-width="1.400"/></svg>
<div class="a" style="left:48px;top:669px;width:76px;height:17px;background:#f4f3ee"></div>
<div class="sbb a" style="left:49px;top:670px;height:15px"><svg style="left:3px;top:2px" width="6" height="9" viewBox="0 0 6 9" fill="none" stroke="#c9c7ba" stroke-width="1.800"><path d="M5.500.500l-4 4 4 4"/></svg></div>
<div class="sbb a" style="left:109px;top:670px;height:15px"><svg style="left:5px;top:2px" width="6" height="9" viewBox="0 0 6 9" fill="none" stroke="#c9c7ba" stroke-width="1.800"><path d="M.5.500l4 4-4 4"/></svg></div>
<!-- TASK PANE -->
<div class="a" style="left:797px;top:105px;width:227px;height:581px;background:#c2d6f8"></div>
<div class="a" style="left:800px;top:105px;width:221px;height:31px;background:linear-gradient(#dbe8fc 0,#d5e3fb 8px,#b6cef3 15px,#94b4ea 20px,#7fa4e2 25px)"></div>
<div class="grip a" style="left:803px;top:109px;height:15px"></div><div class="gripw a" style="left:804px;top:110px;height:15px"></div>
<div class="a nw" style="left:809px;top:112px;font-weight:bold;font-size:11px;letter-spacing:.42px">Создание презентации</div>
<div class="a" style="left:990px;top:115px;border:4.500px solid transparent;border-top:5px solid #000;border-bottom:0"></div>
<svg style="left:1008px;top:115px" width="8" height="8" viewBox="0 0 8 8" stroke="#000" stroke-width="1.500"><path d="M.5.5l7 7M7.500.500l-7 7"/></svg>
<div class="a" style="left:800px;top:130px;width:221px;height:552px;background:#dce9fd;border-radius:0 5px 0 0"></div>
<div class="a" style="left:800px;top:130px;width:87px;height:19px;background:linear-gradient(#5f8cdc 0,#4f7cd0 9px,#4874ca 19px);border-radius:4px 0 4px 0"></div>
<svg style="left:807px;top:132px" width="14" height="14" viewBox="0 0 14 14"><circle cx="7" cy="7" r="6.500" fill="#6ab83c" stroke="#2c5c18" stroke-width=".8"/><circle cx="7" cy="7" r="5.600" fill="none" stroke="#c8e8a8" stroke-width="1"/><path d="M2.500 7l4.500-4v2.500h4v3h-4v2.500z" fill="#fff" stroke="#1c3c10" stroke-width=".8"/></svg>
<div class="a" style="left:828px;top:133px;width:1px;height:14px;background:#c4d8f8"></div>
<svg style="left:836px;top:132px" width="14" height="14" viewBox="0 0 14 14"><circle cx="7" cy="7" r="6.300" fill="#a4bae4" stroke="#c8d8f4" stroke-width="1"/><path d="M11.500 7l-4.500-4v2.500h-4v3h4v2.500z" fill="#c8d4ee" stroke="#8ea4d4" stroke-width=".8"/></svg>
<div class="a" style="left:857px;top:133px;width:1px;height:14px;background:#c4d8f8"></div>
<svg style="left:865px;top:132px" width="14" height="14" viewBox="0 0 14 14"><path d="M2.500 7.500l4.500-4.500 4.500 4.500v6h-9z" fill="#fff" stroke="#555" stroke-width=".8"/><path d="M.500 7.500l6.500-6.500 6.500 6.500" fill="none" stroke="#c8862a" stroke-width="1.800"/><rect x="6" y="9.500" width="2" height="4" fill="#d8a850"/><rect x="10" y="1" width="1.500" height="3" fill="#c83020"/></svg>
<!-- sections -->
<div class="ph a nw" style="left:806px;top:157px">Создание</div>
<div class="pl a" style="top:169px"></div>
<svg style="left:816px;top:174px" width="14" height="15" viewBox="0 0 14 15"><path d="M1.500 .500h7l3 3v10h-10z" fill="#fff" stroke="#6b7f9e"/><path d="M8.500 .500v3h3" fill="#e4ebf5" stroke="#6b7f9e"/><path d="M2.500 14h10v-9" fill="none" stroke="#47587a"/></svg>
<div class="lk a nw" style="top:175px">Новая презентация</div>
<svg style="left:815px;top:194px" width="16" height="15" viewBox="0 0 16 15"><rect x="4.500" y="4.500" width="11" height="9" rx="1" fill="#cfe0d2" stroke="#3c6c4c"/><rect x=".5" y=".5" width="11" height="9" rx="1" fill="#fff" stroke="#3c6c4c"/><rect x="1.500" y="1.500" width="9" height="2.500" fill="#58a058"/><path d="M2.500 6h6M2.500 8h4" stroke="#6a8ab8"/></svg>
<div class="lk a nw" style="top:195px;letter-spacing:-.33px">Из шаблона оформления</div>
<svg style="left:815px;top:213px" width="16" height="17" viewBox="0 0 16 17"><path d="M5.500 3.500h10v12h-10z" fill="#fff" stroke="#6b7f9e"/><rect x=".5" y="2.500" width="10" height="10" fill="#e06a3c" stroke="#b3441c"/><rect x="3" y="5" width="5" height="5" fill="#f8d8c8"/><path d="M12 1l-3 5" stroke="#e0b030" stroke-width="1.600"/><path d="M7 15.500h9" stroke="#27406e"/></svg>
<div class="lk a nw" style="top:215px">Из мастера автосодержания…</div>
<svg style="left:815px;top:232px" width="16" height="17" viewBox="0 0 16 17"><path d="M5.500 3.500h10v12h-10z" fill="#fff" stroke="#6b7f9e"/><path d="M8 7h6M8 9h6M8 11h6" stroke="#8a9ac0"/><rect x=".5" y="5.500" width="9" height="9" fill="#e06a3c" stroke="#b3441c"/><rect x="2.500" y="7.500" width="5" height="5" fill="#f8d8c8"/><path d="M3.500 0v7M0 3.500h7M1 1l5 5M6 1l-5 5" stroke="#f0d020" stroke-width="1"/></svg>
<div class="lk a nw" style="top:235px">Из имеющейся презентации…</div>
<div class="lk a nw" style="top:254px">Фотоальбом…</div>
<div class="ph a nw" style="left:806px;top:274px">Шаблоны</div>
<div class="pl a" style="top:286px"></div>
<div class="a nw" style="left:814px;top:289px;font-size:11px">Поиск в сети:</div>
<div class="a" style="left:815px;top:302px;width:112px;height:20px;background:#fff;border:1px solid #7f9db9"></div>
<div class="a nw" style="left:938px;top:303px;width:76px;height:19px;background:#f1efe2;border:1px solid #d6d2bf;border-radius:3px;color:#aca899;text-align:center;line-height:19px;font-size:11px">Найти</div>
<svg style="left:815px;top:326px" width="16" height="17" viewBox="0 0 16 17"><circle cx="9" cy="10" r="6" fill="#3a8ad0" stroke="#1c5a98" stroke-width=".7"/><path d="M6 7q3-1 5 1t-1 4-4 1 0-4z" fill="#58b848"/><rect x="0" y="0" width="3" height="3" fill="#e04028"/><rect x="4" y="1" width="3" height="3" fill="#e8c020"/><rect x="1" y="4" width="3" height="3" fill="#48a838"/><rect x="5" y="5" width="3" height="3" fill="#3868d0"/></svg>
<div class="lk a nw" style="top:328px;letter-spacing:-.08px">Шаблоны на узле Office Online</div>
<svg style="left:815px;top:346px" width="16" height="16" viewBox="0 0 16 16"><path d="M5.500 1.500h10v13h-10z" fill="#fff" stroke="#6b7f9e"/><path d="M11 4h3M11 6h3M11 8h3" stroke="#8a9ac0"/><rect x=".5" y=".5" width="10" height="10" fill="#e06a3c" stroke="#b3441c"/><rect x="3" y="3" width="5" height="5" fill="#f8d8c8"/><path d="M5 15.500h11" stroke="#27406e"/></svg>
<div class="lk a nw" style="top:348px;letter-spacing:-.12px">На моем компьютере…</div>
<svg style="left:815px;top:367px" width="16" height="14" viewBox="0 0 16 14"><path d="M.5 1.500h5l1 1.500h9v10h-15z" fill="#e8c050" stroke="#9a7420"/><rect x="1" y="4" width="14" height="9" fill="#f8e08c"/><circle cx="8" cy="8.500" r="3.500" fill="#3a8ad0" stroke="#1c5a98" stroke-width=".6"/><path d="M6 7q2-1 3 .5t-.5 2.500-2.500 0z" fill="#58b848"/></svg>
<div class="lk a nw" style="top:368px">На моих веб-узлах…</div>
<div class="ph a nw" style="left:806px;top:390px">Последние использовавшиеся</div>
<div class="ph a nw" style="left:806px;top:403px">шаблоны</div>
<div class="pl a" style="top:415px"></div>
<div class="lk a nw" style="top:420px">Учебный курс</div>
<div class="lk a nw" style="top:437px;letter-spacing:.3px">Салют.pot</div>
<div class="lk a nw" style="top:454px">План.pot</div>
<div class="lk a nw" style="top:471px">Слои.pot</div>
<!-- DRAW TOOLBAR -->
<div class="a" style="left:0;top:686px;width:1024px;height:26px;background:linear-gradient(90deg,#9dbaee 0,#a6c1f1 300px,#c2d6f8 860px)"></div>
<div class="tb a" style="top:686px;width:614px"></div><div class="tbend a" style="left:616px;top:686px"><div class="a" style="left:3px;top:15px;width:6px;height:1px;background:#fff"></div><div class="a" style="left:3px;top:18px;border:3px solid transparent;border-top:3px solid #fff;border-bottom:0"></div><div class="a" style="left:4px;top:14px;width:5px;height:1px;background:#000"></div><div class="a" style="left:4px;top:17px;border:2.500px solid transparent;border-top:3px solid #000;border-bottom:0"></div></div>
<div class="grip a" style="left:6px;top:691px;height:15px"></div><div class="gripw a" style="left:7px;top:692px;height:15px"></div>
<div class="tl a nw" style="left:13px;top:692px">Дейс<u>т</u>вия</div><div class="arr a" style="left:64px;top:693px"></div>
<div class="sel a" style="left:75px;top:687px;width:23px;height:22px"></div>
<svg style="left:81px;top:690px" width="11" height="17" viewBox="0 0 11 17"><path d="M1 1v12l3-3 2.500 5.500 2-1-2.500-5.500h4z" fill="#fff" stroke="#5a7ab8" stroke-width="1"/></svg>
<div class="sep a" style="left:100px;top:691px"></div>
<div class="tl a nw" style="left:107px;top:692px">Автофи<u>г</u>уры</div><div class="arr a" style="left:173px;top:693px"></div>
<svg style="left:189px;top:692px" width="12" height="12" viewBox="0 0 12 12"><path d="M.500 .500l11 11" stroke="#1a1a4a" stroke-width="1.200"/></svg>
<svg style="left:211px;top:692px" width="12" height="12" viewBox="0 0 12 12"><path d="M.500 .500l9 9" stroke="#000" stroke-width="1.200"/><path d="M12 12l-6-2 4-4z" fill="#000"/></svg>
<svg style="left:233px;top:692px" width="16" height="13" viewBox="0 0 16 13"><rect x=".600" y=".600" width="14.800" height="11.800" fill="none" stroke="#000" stroke-width="1.200"/></svg>
<svg style="left:256px;top:692px" width="16" height="13" viewBox="0 0 16 13"><ellipse cx="8" cy="6.500" rx="7.400" ry="5.800" fill="none" stroke="#000" stroke-width="1.200"/></svg>
<svg style="left:279px;top:691px" width="15" height="14" viewBox="0 0 15 14"><rect x=".500" y=".500" width="14" height="13" fill="#fff" stroke="#5a5a5a"/><text x="2" y="7" font-family="Liberation Sans" font-size="6.500" font-weight="bold" fill="#000">A</text><path d="M8 3h5M8 5.500h5M2 8.500h11M2 11h11" stroke="#555" stroke-width=".9"/></svg>
<svg style="left:302px;top:690px" width="16" height="17" viewBox="0 0 16 17"><path d="M1 16l10-15h4l-3 15h-3l.500-3h-4l-2 3z" fill="#3a68d0" stroke="#1c3a90" stroke-width=".7"/><path d="M7 10l3.500-5.500-1 5.500z" fill="#dbe6fb"/><path d="M12 1l1 15" stroke="#8ab0f0" stroke-width="1"/></svg>
<svg style="left:324px;top:690px" width="16" height="16" viewBox="0 0 16 16"><circle cx="8" cy="8" r="5.500" fill="none" stroke="#7a8aa8" stroke-width="1.200" stroke-dasharray="3 2"/><circle cx="8" cy="2.500" r="2" fill="#d85030"/><circle cx="13" cy="11" r="2" fill="#4a78d8"/><circle cx="3" cy="11" r="2" fill="#e8b030"/></svg>
<svg style="left:348px;top:691px" width="15" height="15" viewBox="0 0 15 15"><rect x=".500" y=".500" width="14" height="14" fill="#fff" stroke="#5a5a5a"/><circle cx="7.500" cy="5.500" r="3" fill="#c87830" stroke="#5a3410" stroke-width=".7"/><path d="M2.500 14q0-5 5-5t5 5z" fill="#4a5ca8" stroke="#2a3468" stroke-width=".6"/></svg>
<svg style="left:371px;top:691px" width="16" height="15" viewBox="0 0 16 15"><rect x=".500" y=".500" width="15" height="14" fill="#fff" stroke="#5a5a5a"/><path d="M1.500 13.500l4.500-6 3.500 4 2-2 3 4z" fill="#5a8a3a"/><circle cx="11" cy="4.500" r="2" fill="#e8a020"/><rect x="1" y="1" width="14" height="5" fill="#b8d4f8" opacity=".6"/></svg>
<div class="sep a" style="left:393px;top:691px"></div>
<svg style="left:400px;top:689px" width="17" height="18" viewBox="0 0 17 18"><path d="M2 7l5-5 6 6-5 5z" fill="#fff" stroke="#2a3a6a"/><path d="M7 0v6" stroke="#2a3a6a"/><path d="M12 7q4 1 3 6" fill="none" stroke="#3a6ad8" stroke-width="1.800"/><rect x="0" y="14" width="16" height="4" fill="#fff" stroke="#8898b8" stroke-width=".6"/></svg>
<div class="arr a" style="left:420px;top:694px"></div>
<svg style="left:434px;top:689px" width="17" height="18" viewBox="0 0 17 18"><path d="M1 12q3-1 4-3l2 2q-1 2-6 1z" fill="#3a68c8" stroke="#1c3a88" stroke-width=".6"/><path d="M5 9l7-7 2 2-7 7z" fill="#4a78d8" stroke="#1c3a88" stroke-width=".7"/><path d="M12 2l2-2 2 2-2 2z" fill="#f0c830" stroke="#8a6a10" stroke-width=".6"/><rect x="0" y="14" width="16" height="4" fill="#000"/></svg>
<div class="arr a" style="left:454px;top:694px"></div>
<div class="a nw" style="left:469px;top:687px;font:bold 16px 'Liberation Serif',serif;color:#2a3e8c">A</div>
<div class="a" style="left:468px;top:703px;width:16px;height:4px;background:#000"></div>
<div class="arr a" style="left:488px;top:694px"></div>
<svg style="left:500px;top:692px" width="16" height="13" viewBox="0 0 16 13" stroke="#000"><path d="M0 1.500h16" stroke-width="1"/><path d="M0 5.500h16" stroke-width="2"/><path d="M0 10.500h16" stroke-width="3"/></svg>
<svg style="left:524px;top:692px" width="17" height="13" viewBox="0 0 17 13" stroke="#000"><path d="M0 1.500h17" stroke-width="1" stroke-dasharray="1 1"/><path d="M0 5.500h17" stroke-width="1" stroke-dasharray="2 1"/><path d="M0 9.500h17" stroke-width="1" stroke-dasharray="3 1"/><path d="M0 12.500h17" stroke-width="1" stroke-dasharray="1 1"/></svg>
<svg style="left:548px;top:691px" width="16" height="15" viewBox="0 0 16 15" stroke="#000" fill="none" stroke-width="1.200"><path d="M0 2.500h15M12 0l3 2.500-3 2.500M16 7.500h-15M4 5l-3 2.500 3 2.500M0 12.500h16M3 10l-3 2.500 3 2.500M13 10l3 2.500-3 2.500"/></svg>
<svg style="left:572px;top:691px" width="15" height="15" viewBox="0 0 15 15"><rect x="3" y="3" width="12" height="12" fill="#7a7a7a"/><rect x=".500" y=".500" width="12" height="12" fill="#6cb860" stroke="#2c6c20"/><rect x="1.500" y="1.500" width="10" height="4" fill="#8ccc78" opacity=".7"/></svg>
<svg style="left:594px;top:690px" width="16" height="16" viewBox="0 0 16 16"><path d="M.500 4.500h11v11h-11z" fill="#78c06c" stroke="#2c6c20"/><path d="M.500 4.500l4-4h11l-4 4z" fill="#a8d898" stroke="#2c6c20"/><path d="M11.500 4.500l4-4v11l-4 4z" fill="#3c8430" stroke="#2c6c20"/></svg>
<!-- STATUS BAR -->
<div class="a" style="left:0;top:711px;width:1024px;height:1px;background:#c2d6f8"></div>
<div class="a" style="left:0;top:712px;width:1024px;height:22px;background:#ece9d8;border-top:1px solid #fff"></div>
<div class="sp a" style="left:4px;width:245px">Слайд 1 из 1</div>
<div class="sp a" style="left:254px;width:245px">Оформление по умолчанию</div>
<div class="sp a" style="left:504px;width:178px">русский (Россия)</div>
<div class="sp a" style="left:686px;width:31px"></div>
<!-- TASKBAR -->
<div class="a" style="left:0;top:734px;width:1024px;height:4px;background:linear-gradient(#0b55dc 0,#1564ec 2px,#0a4ed4 4px)"></div><div class="a" style="left:0;top:738px;width:1024px;height:30px;background:linear-gradient(#3078ee 0,#3a84f4 1px,#2a6ae6 3px,#245edc 7px,#2560de 20px,#2258d2 26px,#1c4cc0 30px)"></div>
<div class="a" style="left:0;top:738px;width:96px;height:30px;border-radius:0 12px 12px 0;background:linear-gradient(#2f7f2f 0,#4da64d 2px,#3d993d 7px,#369136 18px,#2b7b2b 27px,#216821 30px);box-shadow:1px 0 2px #1a3a8a,inset -6px 0 6px -3px #1f641f,inset 0 -3px 4px -2px #1f641f"></div>
<svg style="left:10px;top:743px" width="20" height="18" viewBox="0 0 20 18"><path d="M2 2q3.500-2 7 0l-1.500 6q-3.500-2-7 0z" fill="#e8502c"/><path d="M10.500 2.500q3.500 2 7.500 0l-1.500 6q-4 2-7.500 0z" fill="#6cc04c"/><path d="M.500 9.500q3.500-2 7 0l-1.500 6q-3.500-2-7 0z" fill="#4a7ce8"/><path d="M9 10q3.500 2 7.500 0l-1.500 6q-4 2-7.500 0z" fill="#f0c030"/></svg>
<div class="a nw" style="left:34px;top:743px;font:italic bold 18px 'Liberation Sans',sans-serif;color:#fff;text-shadow:1px 1px 1px #1a4a1a;letter-spacing:-1px">пуск</div>
<div class="a" style="left:106px;top:743px;width:2px;height:22px;background:repeating-linear-gradient(#1438a0 0,#1438a0 2px,transparent 2px,transparent 4px)"></div>
<div class="a" style="left:109px;top:745px;width:2px;height:22px;background:repeating-linear-gradient(#1438a0 0,#1438a0 2px,transparent 2px,transparent 4px)"></div>
<!-- TASK BUTTONS -->
<div class="tk a" style="left:116px;width:94px"><svg style="left:9px;top:4px" width="16" height="14" viewBox="0 0 16 14"><path d="M.5 1.500h5l1.500 2h8.500v9.500h-15z" fill="#e8c050" stroke="#9a7420"/><rect x="1" y="4.500" width="14" height="8" fill="#fbe48c"/></svg><div class="a nw" style="left:28px;top:5px">C:\Docu…</div></div>
<div class="tk a" style="left:212px;width:94px"><svg style="left:9px;top:3px" width="16" height="17" viewBox="0 0 16 17"><path d="M3.500 .500h9l3 3v13h-12z" fill="#fff" stroke="#4a5c8c"/><path d="M6 5h7M6 7h7M6 9h7M6 11h7M6 13h7" stroke="#9aa8c8"/><rect x="0" y="3" width="9" height="9" fill="#2a58b8"/><text x="1" y="10.500" font-family="Liberation Sans" font-size="8.500" font-weight="bold" fill="#fff">W</text></svg><div class="a nw" style="left:28px;top:5px">Презен…</div></div>
<div class="tk tka a" style="left:307px;width:96px"><svg style="left:9px;top:3px" width="17" height="17" viewBox="0 0 17 17"><rect x="0" y="0" width="16" height="16" rx="1" fill="#c8562c"/><rect x="1" y="1" width="14" height="14" fill="#e8784a"/><rect x="2" y="3" width="12" height="10" fill="#fbe9df" stroke="#a03818" stroke-width=".8"/><circle cx="7" cy="8.500" r="3.200" fill="#d9541e"/><path d="M7 8.500V5.300A3.200 3.200 0 0 1 10.200 8.500z" fill="#fff"/><rect x="11" y="6" width="2" height="1" fill="#a03818"/><rect x="11" y="8" width="2" height="1" fill="#a03818"/></svg><div class="a nw" style="left:28px;top:5px">Microsof…</div></div>
<div class="tk a" style="left:404px;width:95px"><svg style="left:9px;top:3px" width="17" height="17" viewBox="0 0 17 17"><path d="M4.500 .500h9l3 3v13h-12z" fill="#fff" stroke="#6a7a9c"/><circle cx="7" cy="9" r="4.800" fill="none" stroke="#2a68d8" stroke-width="2.200"/><path d="M2.500 9h9" stroke="#2a68d8" stroke-width="1.800"/><path d="M1 13q-2-6 6-9" fill="none" stroke="#e8b830" stroke-width="1.200"/></svg><div class="a nw" style="left:28px;top:5px">Яndex: …</div></div>
<div class="tk a" style="left:503px;width:92px"><svg style="left:9px;top:3px" width="17" height="17" viewBox="0 0 17 17"><path d="M4.500 .500h9l3 3v13h-12z" fill="#fff" stroke="#6a7a9c"/><circle cx="7" cy="9" r="4.800" fill="none" stroke="#2a68d8" stroke-width="2.200"/><path d="M2.500 9h9" stroke="#2a68d8" stroke-width="1.800"/><path d="M1 13q-2-6 6-9" fill="none" stroke="#e8b830" stroke-width="1.200"/></svg><div class="a nw" style="left:28px;top:5px">BETA4 P…</div></div>
<div class="tk a" style="left:596px;width:94px"><svg style="left:9px;top:3px" width="17" height="17" viewBox="0 0 17 17"><path d="M4.500 .500h9l3 3v13h-12z" fill="#fff" stroke="#6a7a9c"/><circle cx="7" cy="9" r="4.800" fill="none" stroke="#2a68d8" stroke-width="2.200"/><path d="M2.500 9h9" stroke="#2a68d8" stroke-width="1.800"/><path d="M1 13q-2-6 6-9" fill="none" stroke="#e8b830" stroke-width="1.200"/></svg><div class="a nw" style="left:28px;top:5px">UserGat…</div></div>
<div class="tk a" style="left:692px;width:94px"><svg style="left:9px;top:3px" width="17" height="17" viewBox="0 0 17 17"><circle cx="8.500" cy="8.500" r="7.800" fill="#3a8ad8" stroke="#bfe0ff" stroke-width="1"/><path d="M3 5q4-3 8-1t2 5-6 3-4-7z" fill="#68c858"/><path d="M8.500 6v7M5.500 10l3 3.500 3-3.500" fill="none" stroke="#d83020" stroke-width="1.800"/></svg><div class="a nw" style="left:28px;top:5px">Downlo…</div></div>
<div class="a" style="left:793px;top:745px;width:2px;height:20px;background:repeating-linear-gradient(#1438a0 0,#1438a0 2px,transparent 2px,transparent 4px)"></div>
<div class="a" style="left:796px;top:747px;width:2px;height:18px;background:repeating-linear-gradient(#1438a0 0,#1438a0 2px,transparent 2px,transparent 4px)"></div>
<div class="a nw" style="left:805px;top:746px;width:17px;height:15px;background:#3a6ad4;color:#fff;font-size:11px;line-height:15px;text-align:center">RU</div>
<div class="a" style="left:841px;top:738px;width:183px;height:30px;background:linear-gradient(#1288e0 0,#32aaf6 1px,#1a9cf0 4px,#1494ea 10px,#1593ea 23px,#1080d0 30px);border-left:1px solid #0c4aa8;box-shadow:inset 1px 0 0 #38b0f8"></div>
<svg style="left:852px;top:744px" width="16" height="16" viewBox="0 0 16 16"><circle cx="8" cy="8" r="7.500" fill="#3a8ad8" stroke="#bfe0ff"/><path d="M3 5q4-3 8-1t2 5-6 3-4-7z" fill="#68c858"/><path d="M8 5v7M5 9l3 3.500 3-3.500" fill="none" stroke="#d83020" stroke-width="1.800"/></svg>
<svg style="left:872px;top:744px" width="16" height="16" viewBox="0 0 16 16"><rect x="3" y="0" width="7" height="5" fill="#222"/><rect x="2" y="5" width="9" height="7" fill="#38b030" stroke="#111"/><rect x="4" y="12" width="5" height="4" fill="#2848c8" stroke="#111"/><rect x="5" y="2" width="3" height="3" fill="#f0c8a0"/></svg>
<svg style="left:889px;top:744px" width="16" height="16" viewBox="0 0 16 16"><rect x="0" y="4" width="9" height="7" fill="#c8d4e8" stroke="#3a4a6a"/><rect x="1.500" y="5.500" width="6" height="4" fill="#2a48a8"/><rect x="2" y="12" width="5" height="2" fill="#8a98b8"/><path d="M11 3q3 4 0 8M13.500 1q4.500 6 0 12" fill="none" stroke="#fff" stroke-width="1.200"/></svg>
<svg style="left:906px;top:744px" width="16" height="16" viewBox="0 0 16 16"><rect x="0" y="6" width="14" height="8" rx="1" fill="#d8d8d8" stroke="#333"/><rect x="3" y="2" width="8" height="5" fill="#fff" stroke="#333"/><circle cx="10" cy="5" r="4.500" fill="#3868d8" stroke="#fff" stroke-width=".8"/><text x="8.300" y="8" font-family="Liberation Serif" font-size="8" font-weight="bold" fill="#fff">i</text></svg>
<svg style="left:924px;top:744px" width="16" height="16" viewBox="0 0 16 16"><ellipse cx="7" cy="8" rx="5" ry="7" fill="#b8b8b8" stroke="#444"/><ellipse cx="7" cy="8" rx="2.500" ry="4" fill="#666"/><path d="M11 13q4-1 5-5" fill="none" stroke="#e03020" stroke-width="1.400"/></svg>
<svg style="left:941px;top:744px" width="16" height="16" viewBox="0 0 16 16"><rect x="0" y="0" width="16" height="16" fill="#fff"/><path d="M1 1h4v6l5-6h5l-6 7 6 7h-5l-5-6v6h-4z" fill="#d81818"/><path d="M9 9l7 7h-7z" fill="#111"/></svg>
<svg style="left:959px;top:744px" width="16" height="16" viewBox="0 0 16 16"><rect x="1" y="7" width="12" height="7" fill="#c8c8c8" stroke="#444" transform="rotate(-20 7 10)"/><path d="M8 0v7M5 4.500l3 3.500 3-3.500" fill="none" stroke="#28a828" stroke-width="2.200"/></svg>
<div class="a nw" style="left:982px;top:747px;color:#fff;font-size:11px">12:42</div>
</body></html>
